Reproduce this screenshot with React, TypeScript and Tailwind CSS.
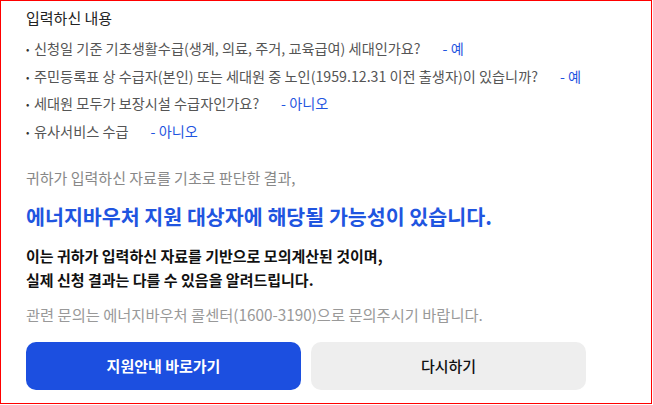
import React from "react";

const items: { q: string; a: string }[] = [
  { q: "신청일 기준 기초생활수급(생계, 의료, 주거, 교육급여) 세대인가요?", a: "- 예" },
  { q: "주민등록표 상 수급자(본인) 또는 세대원 중 노인(1959.12.31 이전 출생자)이 있습니까?", a: "- 예" },
  { q: "세대원 모두가 보장시설 수급자인가요?", a: "- 아니오" },
  { q: "유사서비스 수급", a: "- 아니오" },
];

export default function App() {
  return (
    <div
      className="w-[652px] h-[404px] border border-[#ff0000] bg-white pl-[25px] pr-[40px] pt-[6px]"
      style={{ fontFamily: '"Noto Sans CJK KR", "Noto Sans", sans-serif' }}
    >
      <div className="text-[15px] leading-[22px] text-[#222]">입력하신 내용</div>
      <ul className="mt-[6px] flex flex-col">
        {items.map((it, i) => (
          <li key={i} className="flex items-center h-[27.5px] text-[14.2px] text-[#555] whitespace-nowrap">
            <span className="w-[8px] text-[10px] text-[#333]">•</span>
            <span>{it.q}</span>
            <span className="ml-[22px] text-[#1f55e0]">{it.a}</span>
          </li>
        ))}
      </ul>
      <div className="mt-[22px] text-[15px] leading-[22px] text-[#888]">
        귀하가 입력하신 자료를 기초로 판단한 결과,
      </div>
      <div className="mt-[13px] text-[20.6px] leading-[28px] font-bold text-[#1f55e0] whitespace-nowrap">
        에너지바우처 지원 대상자에 해당될 가능성이 있습니다.
      </div>
      <div className="mt-[14px] text-[15px] leading-[24px] font-semibold text-[#111]">
        <div>이는 귀하가 입력하신 자료를 기반으로 모의계산된 것이며,</div>
        <div>실제 신청 결과는 다를 수 있음을 알려드립니다.</div>
      </div>
      <div className="mt-[11px] text-[15.3px] leading-[22px] text-[#999] whitespace-nowrap">
        관련 문의는 에너지바우처 콜센터(1600-3190)으로 문의주시기 바랍니다.
      </div>
      <div className="mt-[17px] flex gap-[10px]">
        <button className="w-[275px] h-[48px] rounded-[10px] bg-[#1c4fe0] text-white text-[15px] font-semibold">
          지원안내 바로가기
        </button>
        <button className="w-[275px] h-[48px] rounded-[10px] bg-[#eeeeee] text-[#111] text-[15px] font-medium">
          다시하기
        </button>
      </div>
    </div>
  );
}
